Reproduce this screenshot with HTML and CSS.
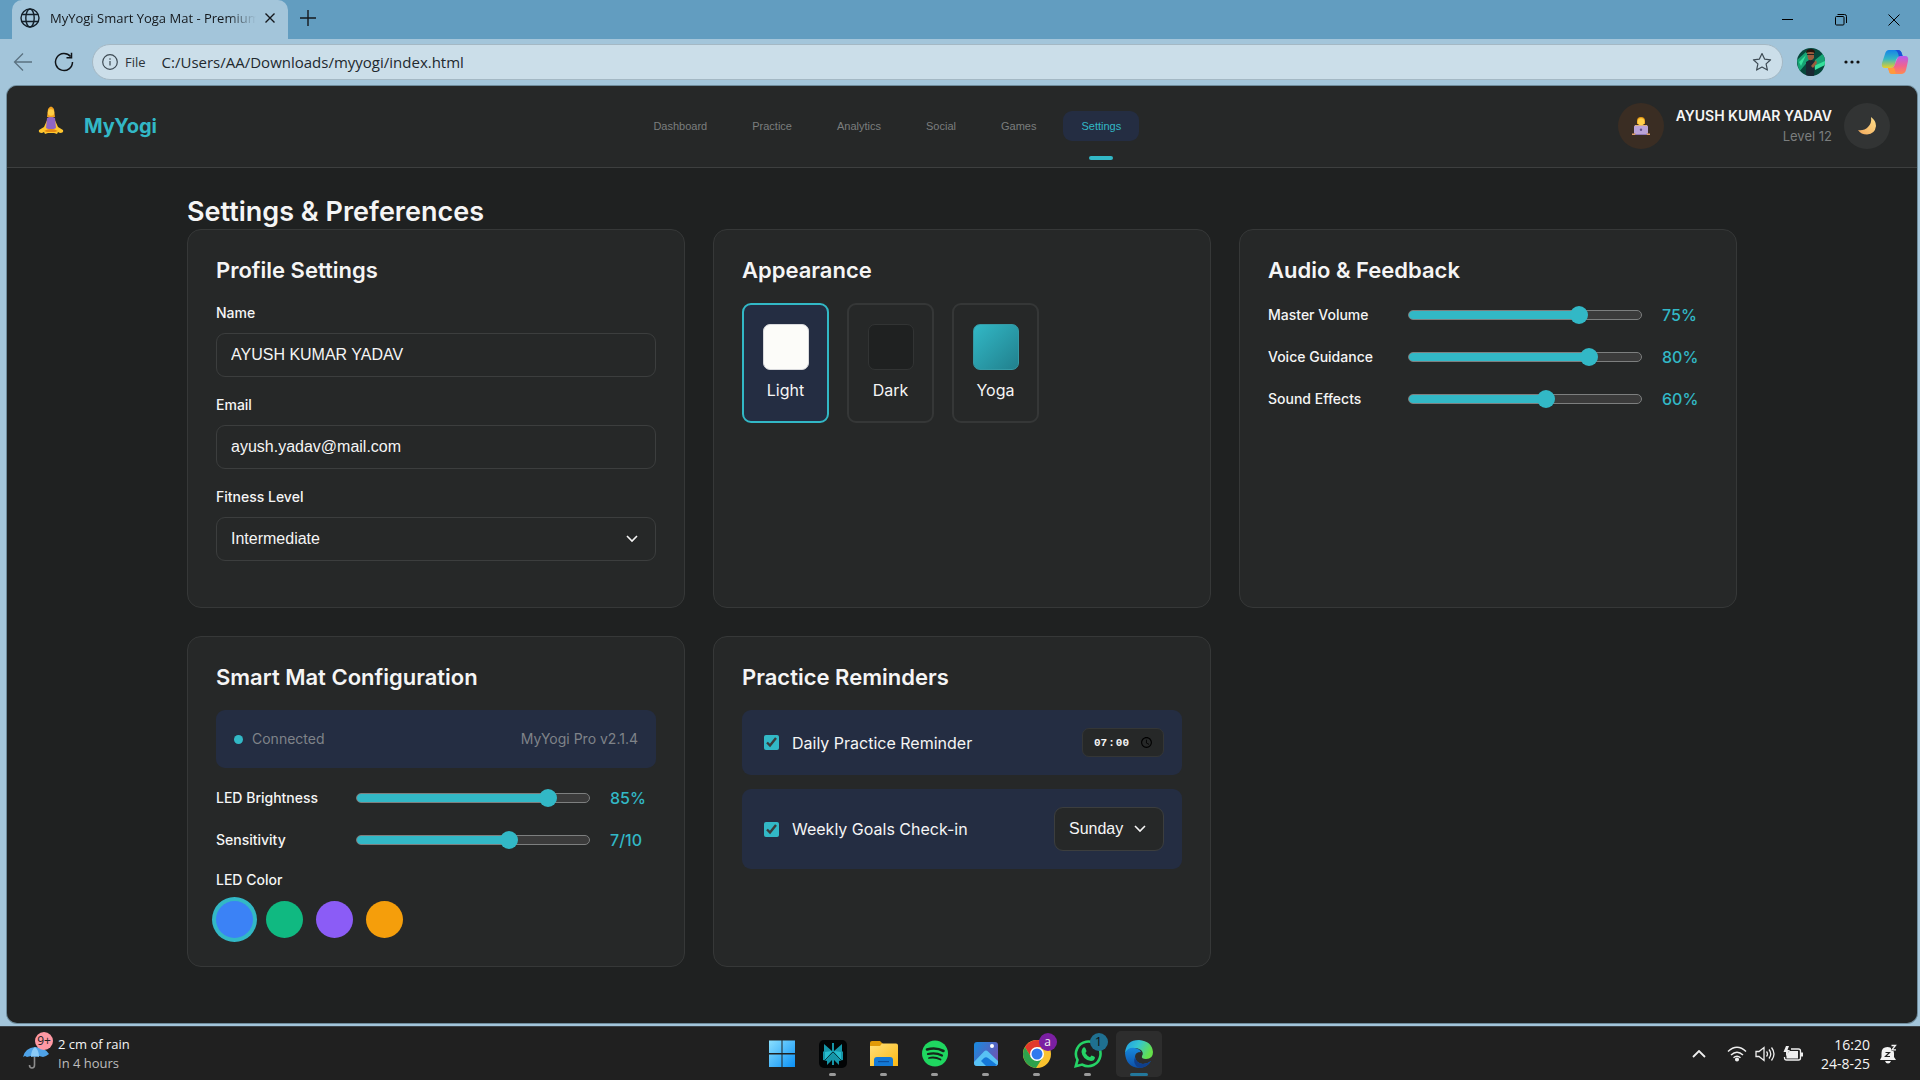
FILE: index.html
```html
<!DOCTYPE html>
<html lang="en">
<head>
<meta charset="utf-8">
<title>MyYogi Smart Yoga Mat - Premium</title>
<link rel="stylesheet" href="styles.css">
</head>
<body>
<div class="browser">
  <div class="tabstrip">
    <div class="tab">
      <svg class="icon-20" viewBox="0 0 20 20" fill="none" stroke="#14202a" stroke-width="1.4"><circle cx="10" cy="10" r="9"/><ellipse cx="10" cy="10" rx="4.2" ry="9"/><path d="M2 6.5h16M2 13.5h16"/></svg>
      <span class="tab-title">MyYogi Smart Yoga Mat - Premium</span>
      <button class="tab-close" aria-label="Close tab"><svg width="12" height="12" viewBox="0 0 12 12" stroke="#14181c" stroke-width="1.4"><path d="M1.5 1.5l9 9M10.5 1.5l-9 9"/></svg></button>
    </div>
    <button class="new-tab" aria-label="New tab"><svg width="16" height="16" viewBox="0 0 16 16" stroke="#14181c" stroke-width="1.4"><path d="M8 0v16M0 8h16"/></svg></button>
    <div class="window-controls">
      <button aria-label="Minimize"><svg width="12" height="12" viewBox="0 0 12 12" stroke="#000" fill="none"><path d="M0 5.5h11"/></svg></button>
      <button aria-label="Restore"><svg width="12" height="12" viewBox="0 0 12 12" stroke="#000" fill="none"><rect x=".5" y="2.5" width="8.500" height="8.500" rx="1"/><path d="M2.500 .5h7a2 2 0 0 1 2 2v6.500"/></svg></button>
      <button aria-label="Close window"><svg width="12" height="12" viewBox="0 0 12 12" stroke="#000" fill="none"><path d="M.5.5l11 11M11.5.5l-11 11"/></svg></button>
    </div>
  </div>

  <div class="toolbar">
    <button aria-label="Back"><svg class="icon-20" viewBox="0 0 20 20" fill="none" stroke="#5b7280" stroke-width="1.3"><path d="M19 10H1.500M10 1.500L1.500 10l8.500 8.500"/></svg></button>
    <button aria-label="Reload"><svg class="icon-20" viewBox="0 0 20 20" fill="none" stroke="#101418" stroke-width="1.5"><path d="M16.500 4.500A8.500 8.500 0 1 0 18.500 10M17.500 0.800v5h-5"/></svg></button>
    <div class="address">
      <svg class="icon-16" viewBox="0 0 16 16" fill="none" stroke="#3d4a53" stroke-width="1.2"><circle cx="8" cy="8" r="7.300"/><path d="M8 7v4.500M8 4.300v1.500"/></svg>
      <span class="scheme">File</span>
      <input class="url" type="text" aria-label="Address" value="C:/Users/AA/Downloads/myyogi/index.html">
      <button aria-label="Favorite"><svg class="icon-20" viewBox="0 0 20 20" fill="none" stroke="#3d4a53" stroke-width="1.2" stroke-linejoin="round"><path d="M10 1.500l2.600 5.600 6 .7-4.500 4.100 1.300 6.200L10 15l-5.400 3.100 1.300-6.200L1.400 7.800l6-.7z"/></svg></button>
    </div>
    <button class="profile" aria-label="Profile"><svg width="28" height="28" viewBox="0 0 28 28"><defs><clipPath id="face"><circle cx="14" cy="14" r="14"/></clipPath></defs><g clip-path="url(#face)"><path fill="#06483c" d="M0 0h28v28H0z"/><path fill="#17a374" d="M0 12L10 3l3 8-11 13zM28 4L18 12l-1 7 11-4z"/><path fill="#36e09c" d="M17 18l11-5v4l-10 5zM2 14l7-7-5 11z"/><path fill="#1b2733" d="M9 14q5-4 9 0l-1 14H9z"/><path fill="#9a5c3d" d="M10 4h7v6q-3 4-6 1zM14 18l5-6 1 3-4 5z"/><path fill="#25150f" d="M9 5q0-4 5-4 4 0 4 4-4-2-9 0z"/><path stroke="#222" stroke-width="1" d="M10 6.500h7"/></g></svg></button>
    <button aria-label="More"><svg width="16" height="4" viewBox="0 0 16 4" fill="#111"><circle cx="2" cy="2" r="1.600"/><circle cx="8" cy="2" r="1.600"/><circle cx="14" cy="2" r="1.600"/></svg></button>
    <button class="copilot" aria-label="Copilot"><svg width="28" height="26" viewBox="0 0 28 26"><defs><linearGradient id="cpa" x1="0" y1="0" x2="0" y2="1"><stop offset="0" stop-color="#1683e8"/><stop offset=".5" stop-color="#35b7c4"/><stop offset="1" stop-color="#e9cf26"/></linearGradient><linearGradient id="cpb" x1="0" y1="0" x2="0" y2="1"><stop offset="0" stop-color="#b45cf0"/><stop offset=".55" stop-color="#f0628f"/><stop offset="1" stop-color="#ff8a4f"/></linearGradient></defs><path fill="url(#cpa)" d="M8 1h9q3 0 4 4l1 3h-4q-2 0-3 3l-1 4q-1 4-5 4H4q-4 0-3-5l3-9q1-4 4-4z"/><path fill="#1b50d8" d="M17 1q3 0 4 4l1 3h-4q-1-6-4-7z"/><path fill="url(#cpb)" d="M19 7h5q4 0 3 5l-2 9q-1 4-5 4h-8q-3 0-4-3l-1-3h3q3 0 4-4l2-5q1-3 3-3z"/><path fill="#ff9a3c" d="M7 19h3q2 0 3-1l2 7h-4q-3 0-3-3z"/></svg></button>
  </div>

  <div class="page">
    <header class="header">
      <div class="brand">
        <svg width="26" height="30" viewBox="0 0 26 30"><path fill="#f0a020" d="M10 3q3-5 6 0l1 8h-8z"/><circle cx="13" cy="6.500" r="3.200" fill="#ffce45"/><path fill="#ffc62e" d="M10 12q3-2 6 0l4 9 5 3q1 3-3 3l-2-1-1 2-3-1h-6l-3 1-1-2-2 1q-4 0-3-3l5-3z"/><path fill="#8f65c4" d="M9 12q4-2 8 0l1 10q-5 3-10 0z"/><path fill="#e58a12" d="M6 25q7-4 14 0l-3 1h-8z"/></svg>
        <span class="brand-name">MyYogi</span>
      </div>
      <nav class="nav">
        <a href="#dashboard">Dashboard</a>
        <a href="#practice">Practice</a>
        <a href="#analytics">Analytics</a>
        <a href="#social">Social</a>
        <a href="#games">Games</a>
        <a href="#settings" class="active">Settings</a>
      </nav>
      <div class="user">
        <div class="avatar">
          <svg width="18" height="18" viewBox="0 0 18 18"><path fill="#e89a16" d="M5 4q0-4 4-4t4 4v3H5z"/><circle cx="9" cy="4.800" r="3.500" fill="#ffd04a"/><path fill="#ffb92a" d="M3 8h12v5H3z"/><rect x="2" y="8.500" width="14" height="8.500" rx="1" fill="#b9a3d8"/><circle cx="9" cy="12.800" r="1.200" fill="#61508a"/><path fill="#e0a06a" d="M0 16.500h4v1.500H0zM14 16.500h4v1.500h-4z"/><path fill="#8e78b5" d="M3 17h12v1H3z"/></svg>
        </div>
        <div class="user-info">
          <span class="user-name">AYUSH KUMAR YADAV</span>
          <span class="user-level">Level 12</span>
        </div>
        <button class="theme-toggle" aria-label="Toggle theme">
          <svg width="18" height="18" viewBox="0 0 18 18"><defs><linearGradient id="moon" x1="1" y1="0" x2="0" y2="1"><stop offset="0" stop-color="#ffe08a"/><stop offset="1" stop-color="#f2a85c"/></linearGradient></defs><path fill="url(#moon)" d="M13 0q5 3.500 5 9-1 8-9 8.500Q3 17.500 0 13q6 1 10-3 4-4 3-10z"/></svg>
        </button>
      </div>
    </header>

    <main class="content">
      <h1>Settings &amp; Preferences</h1>
      <div class="grid">
        <section class="card">
          <h2>Profile Settings</h2>
          <div class="field"><label for="name">Name</label><input id="name" class="control" type="text" value="AYUSH KUMAR YADAV"></div>
          <div class="field"><label for="email">Email</label><input id="email" class="control" type="email" value="ayush.yadav@mail.com"></div>
          <div class="field"><label for="level">Fitness Level</label><select id="level" class="control"><option>Beginner</option><option selected>Intermediate</option><option>Advanced</option></select></div>
        </section>

        <section class="card">
          <h2>Appearance</h2>
          <div class="themes">
            <button class="theme active"><span class="swatch light"></span>Light</button>
            <button class="theme"><span class="swatch dark"></span>Dark</button>
            <button class="theme"><span class="swatch yoga"></span>Yoga</button>
          </div>
        </section>

        <section class="card">
          <h2>Audio &amp; Feedback</h2>
          <div class="slider-row"><label for="master">Master Volume</label><input id="master" type="range" min="0" max="100" value="75" style="--value:75%"><output for="master">75%</output></div>
          <div class="slider-row"><label for="voice">Voice Guidance</label><input id="voice" type="range" min="0" max="100" value="80" style="--value:80%"><output for="voice">80%</output></div>
          <div class="slider-row"><label for="effects">Sound Effects</label><input id="effects" type="range" min="0" max="100" value="60" style="--value:60%"><output for="effects">60%</output></div>
        </section>

        <section class="card">
          <h2>Smart Mat Configuration</h2>
          <div class="status"><span class="dot"></span><span>Connected</span><span class="version">MyYogi Pro v2.1.4</span></div>
          <div class="slider-row"><label for="led">LED Brightness</label><input id="led" type="range" min="0" max="100" value="85" style="--value:85%"><output for="led">85%</output></div>
          <div class="slider-row"><label for="sens">Sensitivity</label><input id="sens" type="range" min="1" max="10" value="7" style="--value:66%"><output for="sens">7/10</output></div>
          <div class="led">
            <span class="led-label">LED Color</span>
            <div class="colors">
              <button class="color blue active" aria-label="Blue"></button>
              <button class="color green" aria-label="Green"></button>
              <button class="color purple" aria-label="Purple"></button>
              <button class="color orange" aria-label="Orange"></button>
            </div>
          </div>
        </section>

        <section class="card">
          <h2>Practice Reminders</h2>
          <div class="reminders">
            <div class="reminder"><label><input type="checkbox" checked>Daily Practice Reminder</label><input class="time" type="time" value="07:00" aria-label="Daily reminder time"></div>
            <div class="reminder"><label><input type="checkbox" checked>Weekly Goals Check-in</label><select class="control day" aria-label="Check-in day"><option>Sunday</option><option>Monday</option></select></div>
          </div>
        </section>
      </div>
    </main>
  </div>
</div>

<footer class="taskbar">
  <div class="weather">
    <div class="weather-icon">
      <svg width="28" height="26" viewBox="0 0 28 26"><path fill="none" stroke="#8d8d8d" stroke-width="1.600" d="M11.500 11v10q0 3-2.500 3t-2.500-3"/><path fill="#4fa3e8" d="M0 13Q2 4 12 3q11 1 14 7l-3 2-3 1-4-1-4 1-4-1-4 1-2-1z"/><path fill="#8ccbf7" d="M8 13q0-7 4-10 4 3 4 10l-4-1z"/></svg>
      <span class="weather-badge">9+</span>
    </div>
    <div class="weather-text"><span>2 cm of rain</span><span class="muted">In 4 hours</span></div>
  </div>

  <div class="apps">
    <button class="app start" aria-label="Start"><svg width="28" height="28" viewBox="0 0 28 28"><defs><linearGradient id="win" x1="0" y1="0" x2="1" y2="1"><stop offset="0" stop-color="#8be0ff"/><stop offset="1" stop-color="#0a90f5"/></linearGradient></defs><path fill="url(#win)" d="M1 .5h12.500V13H1zM14.500.5H27V13H14.500zM1 14.500h12.500V27H1zM14.500 14.500H27V27H14.500z"/></svg></button>
    <button class="app" aria-label="Comet"><svg width="28" height="28" viewBox="0 0 28 28"><rect width="28" height="28" rx="5" fill="#020405"/><path fill="#1595a8" d="M5 4l8 7V3h2v8l8-7v7l1 1v8l-4 1v4l-5-5v5h-2v-5l-5 5v-4l-4-1v-8l1-1z"/><path fill="#27bccd" d="M13 11L6 20v-8zM15 11l7 9v-8z"/><path stroke="#04262c" stroke-width=".8" fill="none" d="M14 12L5 21M14 12l9 9"/></svg></button>
    <button class="app" aria-label="File Explorer"><svg width="28" height="28" viewBox="0 0 28 28"><defs><linearGradient id="fold" x1="0" y1="0" x2="1" y2="1"><stop offset="0" stop-color="#ffe07a"/><stop offset="1" stop-color="#fbb812"/></linearGradient></defs><path fill="#e09a08" d="M0 3q0-2 2-2h8l3 3v4H0z"/><path fill="url(#fold)" d="M0 6h10l2-2.500h14q2 0 2 2V26H0z"/><path fill="#1379d6" d="M4 26v-6q0-3 3-3h13q3 0 3 3v6z"/><path fill="#0a4f9e" d="M8 21h11v1.200H8z"/></svg></button>
    <button class="app" aria-label="Spotify"><svg width="28" height="28" viewBox="0 0 28 28"><circle cx="14" cy="13.500" r="13" fill="#1fd760"/><path fill="none" stroke="#16251b" stroke-linecap="round" d="M6 9.500q9-2.500 16.500 1.500" stroke-width="2.600"/><path fill="none" stroke="#16251b" stroke-linecap="round" d="M7 14q7.500-2 14 1.500" stroke-width="2.200"/><path fill="none" stroke="#16251b" stroke-linecap="round" d="M8 18q6-1.500 11.500 1.500" stroke-width="1.800"/></svg></button>
    <button class="app" aria-label="Photos"><svg width="28" height="28" viewBox="0 0 28 28"><defs><linearGradient id="ph" x1="0" y1="0" x2="1" y2=".6"><stop offset="0" stop-color="#168be0"/><stop offset="1" stop-color="#6b55b5"/></linearGradient></defs><rect x="2" y="2" width="24" height="24" rx="3" fill="url(#ph)"/><path fill="#58c2f5" d="M2 22L12 11.500q2-2 4 0L26 21v2q0 3-3 3H5q-3 0-3-3z"/><path fill="#1578d8" d="M14 26l-5-5 3-3q2-1.500 4 0l9 7-2 1z"/><circle cx="20" cy="6" r="2" fill="#fff"/></svg></button>
    <button class="app" aria-label="Chrome"><svg width="28" height="28" viewBox="0 0 28 28"><circle cx="14" cy="14" r="14" fill="#f9c22e"/><path fill="#e2392b" d="M1.900 7A14 14 0 0 1 26.100 7H14L8 17z"/><path fill="#2da24c" d="M1.900 7A14 14 0 0 0 13 28l7-11-6 3-6-3z"/><circle cx="14" cy="14" r="7" fill="#fff"/><circle cx="14" cy="14" r="5.500" fill="#3079ee"/></svg><span class="badge purple-badge">a</span></button>
    <button class="app" aria-label="WhatsApp"><svg width="28" height="28" viewBox="0 0 28 28"><path fill="#202020" stroke="#25d366" stroke-width="2.600" d="M1.800 26.200l1.700-6.300a12.300 12.300 0 1 1 4.700 4.700z"/><path fill="#25d366" d="M8.500 8.500q1.500-2 2.800-.5l1.200 3q0 1-1.200 2 1.700 3 4.700 4.200l1.500-1.700q3.500 1 3.500 2-.5 3.500-4 3.500Q8.500 19.500 7.500 12q0-2 1-3.500z"/></svg><span class="badge teal-badge">1</span></button>
    <button class="app current" aria-label="Edge"><svg width="28" height="28" viewBox="0 0 28 28"><defs><linearGradient id="eg" x1="0" y1="0" x2="1" y2=".4"><stop offset="0" stop-color="#1e9be8"/><stop offset=".5" stop-color="#35c5d0"/><stop offset="1" stop-color="#65e04b"/></linearGradient><linearGradient id="eb" x1="0" y1="0" x2="0" y2="1"><stop offset="0" stop-color="#1788dc"/><stop offset="1" stop-color="#0d4fa8"/></linearGradient></defs><path fill="url(#eg)" d="M0 13Q1 0 14 0q13 1 14 12 0 7-7 7-5 0-4-3 2-3-1-6-8-5-16 3z"/><path fill="url(#eb)" d="M0 13q3-6 10-5 5 1 6 4-6 0-6 5 1 6 8 7 4 0 8-3-4 7-12 7Q1 27 0 13z"/><path fill="#0f3f8c" d="M10 17q1 6 8 7 4 0 8-3-4 7-12 7Q7 24 10 17z"/></svg></button>
  </div>

  <div class="tray">
    <button aria-label="Hidden icons"><svg width="14" height="8" viewBox="0 0 14 8" fill="none" stroke="#eee" stroke-width="1.800"><path d="M1 7l6-6 6 6"/></svg></button>
    <div class="tray-icons">
      <svg width="20" height="16" viewBox="0 0 20 16" fill="none" stroke="#eee" stroke-width="1.500"><path d="M1 5.500q9-8.500 18 0M4 9q6-5.500 12 0M6.500 11.800q3.500-3 7 0"/><circle cx="10" cy="13.500" r="1.300" fill="#eee"/></svg>
      <svg width="20" height="16" viewBox="0 0 20 16" fill="none" stroke="#eee" stroke-width="1.300"><path d="M1 5.500h3L9 1.500v13L4 10.500H1zM11.500 5.500q2 2.500 0 5M14 3.500q3.500 4.500 0 9M16.500 1.500q5 6.500 0 13"/></svg>
      <svg width="20" height="16" viewBox="0 0 20 16"><path fill="none" stroke="#eee" stroke-width="1.300" d="M8 3h7.500q2 0 2 2v7q0 2-2 2h-12q-2 0-2-2v-1"/><path fill="#eee" d="M6 5h9v7.500H3.500v-3zM18 6.500h2v4h-2zM3 0l-2.500 6H3v4l4-6H4.500L6 0z"/></svg>
    </div>
    <div class="clock"><span>16:20</span><span>24-8-25</span></div>
    <svg width="18" height="20" viewBox="0 0 18 20"><path fill="#f2f2f2" d="M2.500 9q0-6 6-6t6.500 6v4l2 3H1l1.500-3zM6 17h6q-1 2.500-3 2.500T6 17z"/><path fill="#202020" d="M11 0h7v7h-5.500z"/><path fill="none" stroke="#f2f2f2" stroke-width="1.300" d="M12.500 1.500h4L13 5.800h4"/><path fill="none" stroke="#202020" stroke-width="1.200" d="M6.500 8.500h4l-4 4h4.500"/></svg>
  </div>
</footer>
</body>
</html>
```
FILE: styles.css
```css
:root {
  --bg: #1f2121;
  --surface: #262828;
  --border: #363838;
  --line: #3c3e3e;
  --text: #f5f5f5;
  --muted: #7b7e7e;
  --primary: #32b8c6;
  --tint: #242d42;
}

* { box-sizing: border-box; }

body {
  margin: 0;
  min-height: 100vh;
  display: flex;
  flex-direction: column;
  background: #202020;
  color: var(--text);
  font: 16px/24px Inter, sans-serif;
}

button {
  display: inline-flex;
  align-items: center;
  justify-content: center;
  padding: 0;
  border: 0;
  background: none;
  color: inherit;
  font: inherit;
}

svg { display: block; flex: none; }
.icon-16 { width: 16px; height: 16px; }
.icon-20 { width: 20px; height: 20px; }

/* Browser frame */
.browser {
  flex: 1;
  display: flex;
  flex-direction: column;
  background: #a3c5da;
}

.tabstrip {
  display: flex;
  align-items: center;
  height: 39px;
  padding-left: 12px;
  background: #629dc0;
}

.tab {
  display: flex;
  align-items: center;
  width: 276px;
  height: 39px;
  padding: 0 10px 3px 8px;
  border-radius: 10px 10px 0 0;
  background: #a3c5da;
  color: #14181c;
}

.tab-title {
  flex: 1;
  overflow: hidden;
  margin: 0 6px 0 10px;
  font: 13px/20px "Open Sans", sans-serif;
  white-space: nowrap;
  mask-image: linear-gradient(90deg, #000 86%, transparent);
}

.tab-close { width: 16px; height: 16px; }
.new-tab { width: 40px; height: 36px; margin-bottom: 3px; }

.window-controls { display: flex; margin-left: auto; }
.window-controls button { width: 53px; height: 38px; }

.toolbar {
  display: flex;
  align-items: center;
  height: 47px;
  padding: 0 11px 2px 13px;
}

.toolbar > button { flex: none; margin-right: 21px; }
.toolbar > button:nth-of-type(2) { margin-right: 18px; }
.toolbar > .profile { margin-right: 19px; }
.toolbar > .copilot { margin-right: 0; }

.address {
  flex: 1;
  display: flex;
  align-items: center;
  height: 36px;
  margin-right: 14px;
  padding: 0 10px 0 9px;
  border: 1px solid #a4b8c4;
  border-radius: 18px;
  background: #cbdee9;
}

.scheme {
  margin: 0 16px 0 7px;
  color: #2b343a;
  font: 13px/20px "Open Sans", sans-serif;
}

.url {
  flex: 1;
  padding: 0;
  border: 0;
  background: none;
  color: #22292e;
  font: 15px/20px "Open Sans", sans-serif;
}

/* Page */
.page {
  flex: 1;
  margin: 0 3px 3px 7px;
  border-radius: 10px;
  background: var(--bg);
  box-shadow: 0 0 0 1px #6f8c9c;
}

.header {
  display: flex;
  align-items: center;
  justify-content: space-between;
  height: 82px;
  padding: 0 27px 2px 31px;
  border-bottom: 1px solid #3d3f3f;
  border-radius: 10px 10px 0 0;
  background: var(--surface);
}

.brand { display: flex; align-items: center; gap: 20px; }
.brand svg { margin-bottom: 10px; }

.brand-name {
  color: var(--primary);
  font-size: 20px;
  font-weight: 700;
}

.nav { display: flex; gap: 9px; }

.nav a {
  position: relative;
  padding: 0 18px;
  border-radius: 9px;
  color: var(--muted);
  font: 11px/30px "Liberation Sans", sans-serif;
  text-decoration: none;
}

.nav a.active { background: var(--tint); color: var(--primary); }

.nav a.active::after {
  content: "";
  position: absolute;
  left: calc(50% - 12px);
  bottom: -19px;
  width: 24px;
  height: 4px;
  border-radius: 2px;
  background: var(--primary);
}

.user { display: flex; align-items: center; gap: 12px; }

.avatar, .theme-toggle {
  display: flex;
  align-items: center;
  justify-content: center;
  width: 46px;
  height: 46px;
  border-radius: 50%;
  background: #323434;
}

.avatar { background: #3a2d23; }

.user-info { display: flex; flex-direction: column; text-align: right; }
.user-name { font-size: 14px; font-weight: 600; line-height: 21px; }
.user-level { color: var(--muted); font-size: 13px; line-height: 21px; }

.content {
  max-width: 1606px;
  margin: 0 auto;
  padding: 28px 28px 48px;
}

h1, h2 { margin: 0; font-weight: 600; }
h1 { margin-bottom: 2px; font-size: 27px; line-height: 31px; }
h2 { margin-bottom: 21px; font-size: 22px; line-height: 24px; }

.grid {
  display: grid;
  grid-template-columns: repeat(3, 1fr);
  gap: 28px;
}

.card {
  padding: 28px;
  border: 1px solid var(--border);
  border-radius: 14px;
  background: var(--surface);
}

.field { display: flex; flex-direction: column; gap: 10px; margin-bottom: 18px; }

.field label, .slider-row label, .led-label {
  font-size: 14px;
  font-weight: 500;
  line-height: 20px;
}

.control {
  width: 100%;
  height: 44px;
  padding: 0 14px;
  border: 1px solid var(--line);
  border-radius: 9px;
  background: var(--surface);
  color: var(--text);
  font: 16px/20px "Liberation Sans", sans-serif;
}

select.control {
  appearance: none;
  background: var(--surface) url("data:image/svg+xml,%3Csvg xmlns='http://www.w3.org/2000/svg' width='12' height='8' fill='none' stroke='%23f5f5f5' stroke-width='1.600'%3E%3Cpath d='M1 1l5 5 5-5'/%3E%3C/svg%3E") no-repeat right 17px center;
}

.themes { display: flex; gap: 18px; }

.theme {
  flex-direction: column;
  gap: 8px;
  width: 87px;
  height: 120px;
  border: 2px solid #353737;
  border-radius: 9px;
}

.theme.active { border-color: var(--primary); background: var(--tint); }

.swatch {
  width: 46px;
  height: 46px;
  border: 1px solid #323434;
  border-radius: 7px;
}

.swatch.light { border-color: #d8d9dc; background: #fcfcf9; }
.swatch.dark { background: #1f2121; }
.swatch.yoga { border-color: #359aa5; background: linear-gradient(135deg, #32b8c6, #21808d); }

.slider-row {
  display: flex;
  align-items: center;
  gap: 20px;
  margin-bottom: 18px;
}

.slider-row label { width: 120px; }

.slider-row output {
  width: 46px;
  color: var(--primary);
  font-weight: 500;
}

input[type="range"] {
  flex: 1;
  min-width: 0;
  height: 18px;
  margin: 0;
  appearance: none;
  background: none;
}

input[type="range"]::-webkit-slider-runnable-track {
  height: 10px;
  border: 1px solid #7d7f7f;
  border-radius: 5px;
  background: linear-gradient(90deg, var(--primary) var(--value), #3b3b3b var(--value));
}

input[type="range"]::-webkit-slider-thumb {
  width: 18px;
  height: 18px;
  margin-top: -5px;
  appearance: none;
  border-radius: 50%;
  background: var(--primary);
}

.status {
  display: flex;
  align-items: center;
  height: 58px;
  margin-bottom: 18px;
  padding: 0 18px;
  border-radius: 9px;
  background: var(--tint);
  color: #7f8389;
  font-size: 14px;
}

.dot {
  width: 9px;
  height: 9px;
  margin-right: 9px;
  border-radius: 50%;
  background: var(--primary);
}

.version { margin-left: auto; }

.led { display: flex; flex-direction: column; gap: 11px; }
.colors { display: flex; gap: 13px; }
.color { width: 37px; height: 37px; border-radius: 50%; }
.color.active { box-shadow: 0 0 0 4px var(--primary); }
.blue { background: #3b82f6; }
.green { background: #10b981; }
.purple { background: #8b5cf6; }
.orange { background: #f59e0b; }

.reminders { display: flex; flex-direction: column; gap: 14px; }

.reminder {
  display: flex;
  align-items: center;
  justify-content: space-between;
  padding: 18px;
  border-radius: 9px;
  background: var(--tint);
}

.reminder label { display: flex; align-items: center; }

.reminder input[type="checkbox"] {
  width: 15px;
  height: 15px;
  margin: 0 13px 0 4px;
  color-scheme: dark;
  accent-color: var(--primary);
}

.time {
  width: 82px;
  height: 29px;
  padding: 0 10px;
  border: 1px solid #343636;
  border-radius: 7px;
  background: var(--surface);
  color: var(--text);
  font: bold 11px/16px "Liberation Mono", monospace;
}

.time::-webkit-datetime-edit-ampm-field { display: none; }
.time::-webkit-calendar-picker-indicator { width: 13px; height: 13px; padding: 0; margin: 0; }

.day { width: 110px; }

/* Taskbar */
.taskbar {
  display: grid;
  grid-template-columns: 1fr auto 1fr;
  align-items: center;
  height: 54px;
  border-top: 1px solid #3a4146;
  background: #202020;
  font: 13px/19px "Open Sans", sans-serif;
}

.weather { display: flex; align-items: center; gap: 7px; padding-left: 23px; }
.weather-icon { position: relative; padding-top: 6px; }

.weather-badge {
  position: absolute;
  top: -6px;
  right: -2px;
  width: 18px;
  height: 18px;
  border-radius: 50%;
  background: #ff99a4;
  color: #222;
  font-size: 12px;
  line-height: 18px;
  text-align: center;
}

.weather-text { display: flex; flex-direction: column; }
.muted { color: #bdbdbd; }

.apps { display: flex; gap: 5px; }

.app {
  position: relative;
  width: 46px;
  height: 46px;
  border-radius: 5px;
}

.app::after {
  content: "";
  position: absolute;
  left: calc(50% - 4px);
  bottom: 1px;
  width: 7px;
  height: 3px;
  border-radius: 2px;
  background: #9a9a9a;
}

.app.start::after { display: none; }
.app.current { background: #2d2d2d; }
.app.current::after { left: calc(50% - 9px); width: 18px; background: #23789c; }

.badge {
  position: absolute;
  top: 2px;
  right: 3px;
  width: 18px;
  height: 18px;
  border-radius: 50%;
  line-height: 17px;
  text-align: center;
}

.purple-badge { background: #7b1fa2; font-size: 12px; }
.teal-badge { background: #1f7091; color: #111; }

.tray {
  display: flex;
  align-items: center;
  justify-content: flex-end;
  padding-right: 23px;
}

.tray-icons { display: flex; gap: 8px; margin: 0 16px 0 21px; }

.clock {
  display: flex;
  flex-direction: column;
  width: 51px;
  margin-right: 9px;
  font-size: 14px;
  text-align: right;
}
```
